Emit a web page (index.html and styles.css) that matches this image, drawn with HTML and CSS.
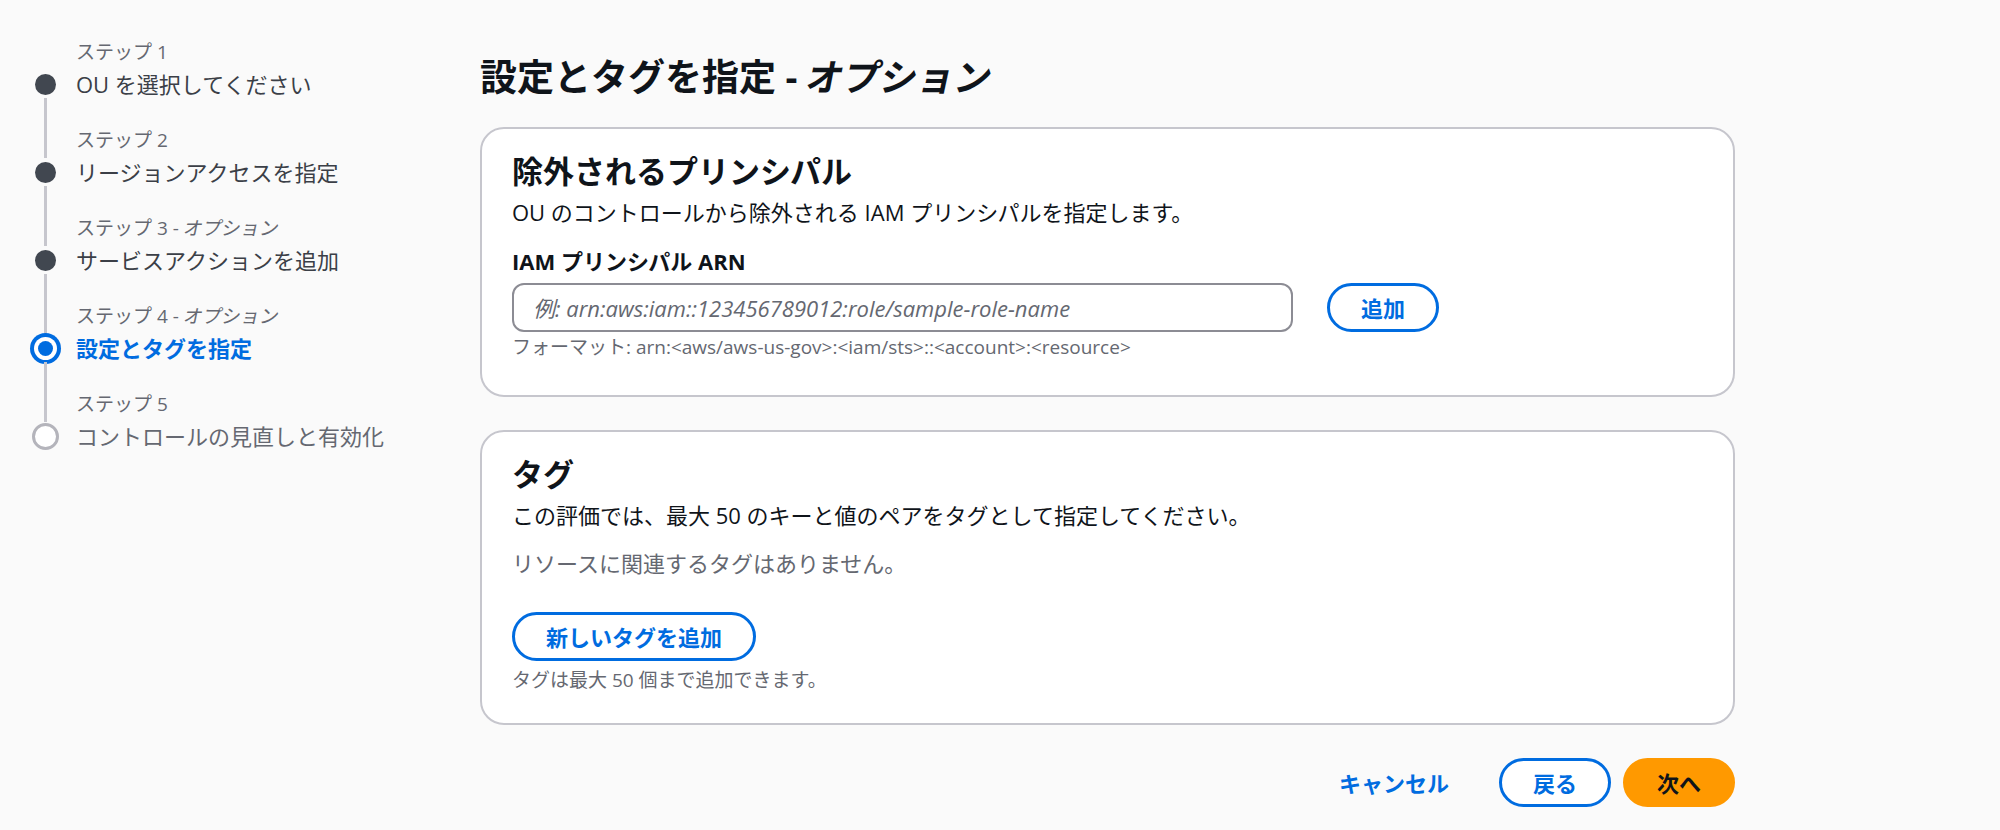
FILE: index.html
```html
<!DOCTYPE html>
<html lang="ja">
<head>
  <meta charset="UTF-8"/>
  <title>設定とタグを指定</title>
  <link rel="stylesheet" href="styles.css">
</head>
<body>
  <div class="layout">
    <nav class="steps">
      <ol>
        <li class="step done">
          <span class="step-label">ステップ 1</span>
          <span class="marker"></span>
          <span class="step-title">OU を選択してください</span>
        </li>
        <li class="step done">
          <span class="step-label">ステップ 2</span>
          <span class="marker"></span>
          <span class="step-title">リージョンアクセスを指定</span>
        </li>
        <li class="step done">
          <span class="step-label">ステップ 3 - <i class="optional">オプション</i></span>
          <span class="marker"></span>
          <span class="step-title">サービスアクションを追加</span>
        </li>
        <li class="step active">
          <span class="step-label">ステップ 4 - <i class="optional">オプション</i></span>
          <span class="marker"></span>
          <span class="step-title">設定とタグを指定</span>
        </li>
        <li class="step pending">
          <span class="step-label">ステップ 5</span>
          <span class="marker"></span>
          <span class="step-title">コントロールの見直しと有効化</span>
        </li>
      </ol>
    </nav>

    <main class="content">
      <h1 class="page-title">設定とタグを指定 - <i class="optional">オプション</i></h1>

      <section class="card principals">
        <h2>除外されるプリンシパル</h2>
        <p class="card-desc">OU のコントロールから除外される IAM プリンシパルを指定します。</p>

        <div class="field">
          <label class="field-label" for="arn">IAM プリンシパル ARN</label>
          <div class="field-row">
            <input id="arn" class="text-input" type="text" placeholder="例: arn:aws:iam::123456789012:role/sample-role-name">
            <button class="btn">追加</button>
          </div>
          <p class="hint">フォーマット: arn:&lt;aws/aws-us-gov&gt;:&lt;iam/sts&gt;::&lt;account&gt;:&lt;resource&gt;</p>
        </div>
      </section>

      <section class="card tags">
        <h2>タグ</h2>
        <p class="card-desc">この評価では、最大 50 のキーと値のペアをタグとして指定してください。</p>
        <p class="empty">リソースに関連するタグはありません。</p>
        <button class="btn add-tag">新しいタグを追加</button>
        <p class="hint">タグは最大 50 個まで追加できます。</p>
      </section>

      <footer class="actions">
        <button class="btn link">キャンセル</button>
        <button class="btn">戻る</button>
        <button class="btn primary">次へ</button>
      </footer>
    </main>
  </div>
</body>
</html>
```

FILE: styles.css
```css
:root {
  --bg-page: #fafafa;
  --bg-card: #fff;
  --text-heading: #0f141a;
  --text-body: #0f141a;
  --text-step: #3b3f47;
  --text-muted: #656871;
  --blue: #006ce0;
  --border-card: #c6c6cd;
  --border-input: #8c8c94;
  --line: #c6c6cd;
  --orange: #ff9900;
}

* { box-sizing: border-box; margin: 0; padding: 0 }

html, body {
  min-height: 100vh;
  background: var(--bg-page);
  color: var(--text-body);
  font-family: "Open Sans", "Noto Sans CJK JP", sans-serif;
  font-size: 22px;
  line-height: 30px;
}

/* CJK has no italic face, so slant it by hand */
.optional {
  display: inline-block;
  font-style: normal;
  transform: skewX(-12deg);
}

/* LAYOUT */
.layout {
  display: grid;
  grid-template-columns: 480px 1255px;
}

/* STEPS */
.steps {
  padding: 40px 0 0 30px;
}
.steps ol { list-style: none }
.step {
  display: grid;
  grid-template-columns: 31px 1fr;
  grid-template-rows: 24px 30px;
  column-gap: 15px;
  row-gap: 5px;
  margin-bottom: 29px;
}
.step-label {
  grid-column: 2;
  grid-row: 1;
  font-size: 19px;
  line-height: 24px;
  color: var(--text-muted);
}
.step-title {
  grid-column: 2;
  grid-row: 2;
  color: var(--text-step);
}
.marker {
  grid-column: 1;
  grid-row: 2;
  position: relative;
  display: flex;
  align-items: center;
  justify-content: center;
}
.marker::before {
  content: "";
  width: 21px;
  height: 21px;
  border-radius: 50%;
  background: #414750;
}
.marker::after {
  content: "";
  position: absolute;
  left: 14px;
  top: 29px;
  width: 3px;
  height: 60px;
  background: var(--line);
}
.step:last-child .marker::after { display: none }

.step.active .step-title {
  color: var(--blue);
  font-weight: 700;
}
.step.active .marker::before {
  width: 15px;
  height: 15px;
  background: var(--blue);
  box-shadow: 0 0 0 4px #fff, 0 0 0 8px var(--blue);
}
.step.pending .step-title { color: var(--text-muted) }
.step.pending .marker::before {
  background: #fff;
  border: 3px solid #b4b4bb;
}

/* CONTENT */
.content {
  padding-top: 54px;
}
.page-title {
  font-size: 37px;
  line-height: 45px;
  font-weight: 700;
  color: var(--text-heading);
  margin-bottom: 28px;
}

.card {
  background: var(--bg-card);
  border: 2px solid var(--border-card);
  border-radius: 24px;
  padding: 24px 30px 31px;
  margin-bottom: 33px;
}
.card h2 {
  font-size: 31px;
  line-height: 36px;
  font-weight: 700;
  color: var(--text-heading);
}
.card-desc {
  margin-top: 8px;
}

.field {
  margin-top: 19px;
  margin-bottom: 5px;
}
.field-label {
  display: block;
  font-weight: 700;
  margin-bottom: 7px;
}
.field-row {
  display: flex;
  align-items: center;
  gap: 34px;
}
.text-input {
  width: 781px;
  height: 49px;
  border: 2px solid var(--border-input);
  border-radius: 12px;
  padding: 0 19px;
  font: inherit;
  background: #fff;
}
.text-input::placeholder {
  color: var(--text-muted);
  font-style: italic;
}
.hint {
  margin-top: 3px;
  font-size: 19px;
  line-height: 24px;
  color: var(--text-muted);
}
.tags .hint { margin-top: 7px }

.empty {
  margin-top: 18px;
  color: var(--text-muted);
}
.add-tag { margin-top: 34px }

/* BUTTONS */
.btn {
  display: inline-flex;
  align-items: center;
  justify-content: center;
  height: 49px;
  padding: 0 31px;
  border: 3px solid var(--blue);
  border-radius: 25px;
  background: #fff;
  color: var(--blue);
  font: inherit;
  font-weight: 700;
  cursor: pointer;
}
.btn.link {
  border-color: transparent;
  background: none;
  padding: 0 35px;
}
.btn.primary {
  background: var(--orange);
  border-color: var(--orange);
  color: #0f141a;
}

.actions {
  display: flex;
  justify-content: flex-end;
  align-items: center;
  gap: 12px;
}
```
